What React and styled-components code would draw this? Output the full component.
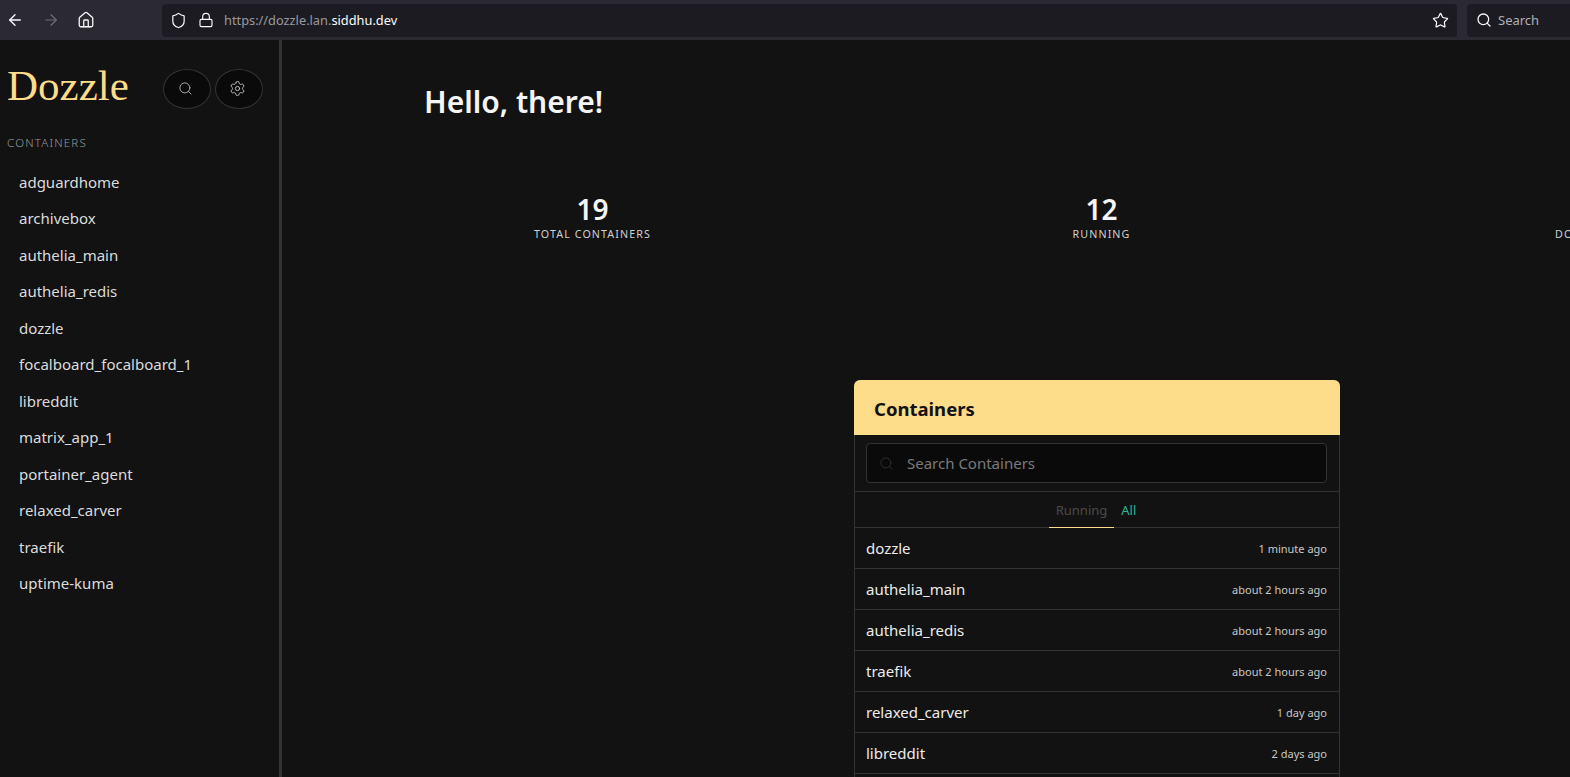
import React from "react";
import styled, { createGlobalStyle } from "styled-components";
import { ArrowLeft, ArrowRight, House, Shield, Lock, Star, Search, Settings } from "lucide-react";

const Global = createGlobalStyle`
  html, body { margin: 0; padding: 0; height: 100%; overflow: hidden; background: #121212; }
  * { box-sizing: border-box; }
  body { font-family: "Noto Sans", "Open Sans", sans-serif; }
`;
const Page = styled.div`
  width: 1570px; height: 777px; display: flex; flex-direction: column; overflow: hidden; background: #121212;
`;
const Chrome = styled.header`
  height: 40px; flex: none; background: #2b2a33; display: flex; align-items: center; padding-left: 6px;
`;
const NavButton = styled.span`
  width: 18px; height: 18px; flex: none; display: flex; color: ${p => (p.$dim ? "#6f6e75" : "#fbfbfe")};
  margin-right: ${p => p.$gap || 0}px;
`;
const UrlBar = styled.div`
  width: 1295px; flex: none; height: 33px; margin-left: 67px; background: #1c1b22; border-radius: 4px; display: flex; align-items: center;
  padding: 0 8px; color: #fbfbfe;
`;
const Url = styled.span`
  font-size: 12.8px; color: #9a999f; margin-left: 10px; flex: 1;
  b { font-weight: 400; color: #fbfbfe; }
`;
const BrowserSearch = styled.div`
  width: 110px; flex: none; height: 33px; margin-left: 10px; background: #1c1b22; border-radius: 4px 0 0 4px; display: flex; align-items: center; gap: 6px;
  padding-left: 9px; color: #fbfbfe; font-size: 13px;
  span { color: #b0afb4; }
`;
const Body = styled.div`
  flex: 1; display: flex; min-height: 0;
`;
const Sidebar = styled.aside`
  width: 282px; flex: none; border-right: 3px solid #333; padding: 0 0 0 7px; background: #121212;
`;
const Brand = styled.div`
  display: flex; align-items: center; height: 92px; padding-top: 6px;
`;
const Logo = styled.h1`
  margin: -7px 0 0; width: 156px; font: 400 43px/1 "Liberation Serif", serif; color: #fddc8a;
`;
const RoundButton = styled.button`
  width: 48px; height: 40px; border-radius: 50%; background: #0a0a0a; border: 1px solid #333; color: #c9c9c9;
  display: flex; align-items: center; justify-content: center; padding: 0 3px 2px 0; margin-right: 4px;
`;
const Label = styled.div`
  font-size: 11.5px; font-weight: 300; letter-spacing: 1.2px; color: #9a9a9a; line-height: 16px; margin-top: 3px; margin-bottom: 13px;
`;
const SideList = styled.ul`
  list-style: none; margin: -0.3px 0 0; padding: 0 0 0 12px;
`;
const SideItem = styled.li`
  height: 36.5px; line-height: 36px; font-size: 15px; color: #dcdcdc;
`;
const Main = styled.main`
  flex: 1; min-width: 0; overflow: hidden; display: flex; flex-direction: column;
`;
const Hello = styled.h2`
  margin: 40px 0 0 142px; font-size: 30px; line-height: 44px; font-weight: 600; color: #f5f5f5;
`;
const Stats = styled.div`
  display: grid; grid-template-columns: 509px 509px 501px; margin: 67px 0 0 56px; width: 1519px;
`;
const Stat = styled.div`
  text-align: center;
`;
const StatValue = styled.div`
  font-size: 28px; line-height: 36px; font-weight: 600; color: #f5f5f5;
`;
const StatLabel = styled.div`
  font-size: 10.7px; line-height: 14px; letter-spacing: 1.1px; color: #d0d0d0; text-transform: uppercase;
`;
const Card = styled.section`
  width: 486px; min-height: 500px; margin: 139px 0 0 572px; border: 1px solid #333; border-radius: 6px 6px 0 0; flex: none;
`;
const CardHead = styled.div`
  height: 55px; background: #fddc8a; color: #121212; font-size: 18.5px; font-weight: 700; display: flex; align-items: center; padding: 1px 0 0 20px;
  margin: -1px -1px 0; border-radius: 6px 6px 0 0;
`;
const SearchWrap = styled.div`
  padding: 8px 12px 8px 11px; border-bottom: 1px solid #333; height: 57px;
`;
const SearchBox = styled.div`
  height: 40px; border: 1px solid #333; border-radius: 4px; background: #0a0a0a; display: flex; align-items: center; gap: 13px; padding-left: 12px;
  color: #333; font-size: 15px;
  span { color: #7a7a7a; }
`;
const Tabs = styled.div`
  display: flex; justify-content: center; height: 36px; border-bottom: 1px solid #333; font-size: 13px; line-height: 36px; padding-right: 2px;
`;
const Tab = styled.span`
  padding: 0 ${p => p.$pad}px; color: ${p => p.$color};
  ${p => p.$active && "border-bottom: 1px solid #fddc8a; height: 36px;"}
`;
const Row = styled.div`
  height: 41px; display: flex; justify-content: space-between; align-items: center; padding: 0 12px 0 11px; border-bottom: 1px solid #333;
`;
const Name = styled.span`
  font-size: 15px; color: #ececec;
`;
const Ago = styled.span`
  font-size: 11px; color: #c8c8c8;
`;

const containers = ["adguardhome","archivebox","authelia_main","authelia_redis","dozzle","focalboard_focalboard_1","libreddit","matrix_app_1","portainer_agent","relaxed_carver","traefik","uptime-kuma"];
const rows = [["dozzle","1 minute ago"],["authelia_main","about 2 hours ago"],["authelia_redis","about 2 hours ago"],["traefik","about 2 hours ago"],["relaxed_carver","1 day ago"],["libreddit","2 days ago"]];

export default function App() {
  return (
    <Page>
      <Global />
      <Chrome>
        <NavButton $gap={18}><ArrowLeft size={18} strokeWidth={1.8} /></NavButton>
        <NavButton $dim $gap={17}><ArrowRight size={18} strokeWidth={1.6} /></NavButton>
        <NavButton><House size={18} strokeWidth={1.7} /></NavButton>
        <UrlBar>
          <Shield size={17} strokeWidth={1.7} />
          <Lock size={16} strokeWidth={1.7} style={{ marginLeft: 11 }} />
          <Url>https://dozzle.lan.<b>siddhu.dev</b></Url>
          <Star size={17} strokeWidth={1.7} />
        </UrlBar>
        <BrowserSearch><Search size={16} strokeWidth={1.9} /><span>Search</span></BrowserSearch>
      </Chrome>
      <Body>
        <Sidebar>
          <Brand>
            <Logo>Dozzle</Logo>
            <RoundButton><Search size={15} strokeWidth={1.3} /></RoundButton>
            <RoundButton><Settings size={17} strokeWidth={1.3} /></RoundButton>
          </Brand>
          <Label>CONTAINERS</Label>
          <SideList>
            {containers.map(c => <SideItem key={c}>{c}</SideItem>)}
          </SideList>
        </Sidebar>
        <Main>
          <Hello>Hello, there!</Hello>
          <Stats>
            <Stat><StatValue>19</StatValue><StatLabel>Total containers</StatLabel></Stat>
            <Stat><StatValue>12</StatValue><StatLabel>Running</StatLabel></Stat>
            <Stat><StatValue>&nbsp;</StatValue><StatLabel>Dozzle version</StatLabel></Stat>
          </Stats>
          <Card>
            <CardHead>Containers</CardHead>
            <SearchWrap>
              <SearchBox><Search size={15} strokeWidth={1.4} /><span>Search Containers</span></SearchBox>
            </SearchWrap>
            <Tabs>
              <Tab $active $pad={7} $color="#4a4a4a">Running</Tab>
              <Tab $pad={7} $color="#2bb795">All</Tab>
            </Tabs>
            {rows.map(([n, a]) => <Row key={n}><Name>{n}</Name><Ago>{a}</Ago></Row>)}
          </Card>
        </Main>
      </Body>
    </Page>
  );
}
